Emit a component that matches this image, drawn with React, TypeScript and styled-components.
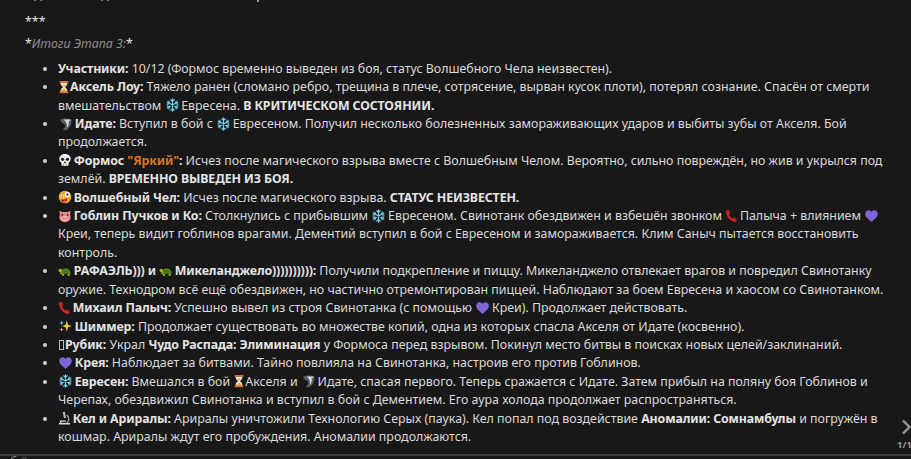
import React from "react";
import styled, { createGlobalStyle } from "styled-components";

const Global = createGlobalStyle`
  html, body { margin: 0; padding: 0; background: #181818; }
  body { width: 911px; height: 459px; overflow: hidden; }
`;

const Page = styled.main`
  position: relative;
  width: 911px;
  height: 459px;
  overflow: hidden;
  background: #181818;
  color: #dadada;
  font-family: "Noto Sans", sans-serif;
  font-size: 12.38px;
  line-height: 18.4px;
`;

const Post = styled.article`
  height: 468px;
  box-sizing: border-box;
  margin-top: -14px;
  padding: 0 16px 0 25px;
`;

const Para = styled.p`
  margin: 0 0 3.6px;
  color: #e2e2e2;
  &:first-child { margin-bottom: 9px; white-space: nowrap; }
`;

const Mark = styled.span`
  color: #e6e6e6;
`;

const Muted = styled.em`
  color: #8f8f8f;
  font-style: italic;
`;

const List = styled.ul`
  margin: 6px 0 0;
  padding: 0 0 0 33px;
  list-style: disc;
`;

const Row = styled.li`
  &::marker { color: #d0d0d0; }
`;

const B = styled.strong`
  font-weight: 700;
  letter-spacing: -0.12px;
  color: #e4e4e4;
`;

const Accent = styled.strong`
  font-weight: 700;
  color: #d9761f;
`;

const Divider = styled.div`
  height: 2px;
  background: #3c3c3c;
`;

const NextPost = styled.div`
  padding-left: 10px;
  height: 3px;
  overflow: hidden;
  color: #8a8a8a;
  line-height: 12px;
`;

const Pager = styled.div`
  position: absolute;
  right: -3px;
  bottom: 8px;
  width: 17px;
  display: flex;
  flex-direction: column;
  align-items: flex-start;
  color: #959595;
  font-size: 9.5px;
  line-height: 12px;
  font-weight: 700;
  white-space: nowrap;
`;

const Chevron = styled.svg`
  width: 11px;
  height: 16px;
  margin: 0 0 4px 4px;
`;

const Icon = styled.svg<{ $w: number; $tight?: boolean }>`
  display: inline-block;
  width: ${(p) => p.$w}px;
  height: 14px;
  margin-right: ${(p) => (p.$tight ? 0 : -1.5)}px;
  vertical-align: -2.5px;
`;

const Tofu = styled.span`
  display: inline-block;
  box-sizing: border-box;
  width: 5px;
  height: 10px;
  margin: 0 1px 0 1px;
  border: 1px solid #bdbdbd;
  vertical-align: -1px;
`;

type Name = "glass" | "idate" | "snow" | "skull" | "zany" | "pig" | "turtle" | "phone" | "spark" | "heart" | "micro";

const art: Record<Name, { w: number; body: React.ReactNode }> = {
  glass: {
    w: 12,
    body: (
      <>
        <path d="M3 1h10v2H3zM3 13h10v2H3z" fill="#e2662c" />
        <path d="M4 3h8c0 3-2 4-3 5 1 1 3 2 3 5H4c0-3 2-4 3-5-1-1-3-2-3-5z" fill="#f1e6d2" />
        <path d="M5 12.8c.6-1.600 2-2.400 3-3 1 .6 2.400 1.400 3 3zM6 5h4L8 7.500z" fill="#f0a63c" />
      </>
    ),
  },
  idate: {
    w: 15,
    body: (
      <>
        <path d="M2 3c3-1.500 8-2 12.500-.5 1 4-.5 9-5 12-1.500.8-3.500.6-5-.2 2-.8 3.200-2.300 3.200-4.300C7 8 4.500 7 3.500 6 2.800 5.200 2.300 4 2 3z" fill="#5a5e60" />
        <path d="M6 3.200c2.500-.6 5.500-.6 8 0-.5 1-1.500 1.600-2.500 1.800.8 2.500 0 5-2 7.500.4-2.500.2-5-1-6.800C8 4.600 7 3.800 6 3.200z" fill="#d5d9d9" />
        <path d="M4.500 7.500c1.800.2 3 1.200 3.200 2.800-1.500 0-2.800-1-3.200-2.800z" fill="#1b1c1c" />
      </>
    ),
  },
  snow: {
    w: 15,
    body: (
      <g stroke="#74d3ea" strokeWidth="1.300" fill="none" strokeLinecap="round">
        <path d="M8 1v14M2 4.500l12 7M14 4.500l-12 7" />
        <path d="M6 2l2 2 2-2M6 14l2-2 2 2M1.800 7l2.800-.6-.8-2.800M14.200 7l-2.800-.6.8-2.800M1.800 9l2.800.6-.8 2.800M14.200 9l-2.800.6.8 2.800" />
      </g>
    ),
  },
  skull: {
    w: 14,
    body: (
      <>
        <path d="M8 1c4 0 6.500 2.500 6.500 5.800 0 2-1 3.400-2.500 4.200v2.500c0 .8-.6 1.300-1.300 1.300H5.300c-.7 0-1.300-.5-1.300-1.300V11C2.500 10.200 1.500 8.800 1.500 6.800 1.500 3.500 4 1 8 1z" fill="#f2f2f2" />
        <circle cx="5.200" cy="7.200" r="1.900" fill="#222" />
        <circle cx="10.800" cy="7.200" r="1.900" fill="#222" />
        <path d="M8 9.500l1 2H7zM6.500 12.500v2.500M9.500 12.500v2.500" fill="#333" stroke="#333" strokeWidth=".6" />
      </>
    ),
  },
  zany: {
    w: 14,
    body: (
      <>
        <circle cx="8" cy="8" r="7.200" fill="#f3a92c" />
        <circle cx="10.500" cy="5.200" r="3" fill="#fff" />
        <circle cx="10.800" cy="5.400" r="1.300" fill="#3a2a1a" />
        <circle cx="4.800" cy="7" r="1.700" fill="#fff" />
        <circle cx="4.800" cy="7" r=".8" fill="#3a2a1a" />
        <path d="M3.500 10.500c2 1 5 .5 7-1 .3 2-1 4.500-3.500 4.800-2 .2-3.500-1.800-3.500-3.800z" fill="#7a1f1f" />
        <path d="M6 12c1-.6 2.500-.6 3 0 .5 1-.2 2.500-1.500 2.500S5.500 13 6 12z" fill="#e8473f" />
      </>
    ),
  },
  pig: {
    w: 14,
    body: (
      <>
        <path d="M1.500 2l3.500 1.500h6L14.500 2l-.8 4.500c.6 1 .8 2 .8 3 0 3.500-3 5.500-6.500 5.500S1.500 13 1.500 9.500c0-1 .2-2 .8-3z" fill="#e88a8a" />
        <circle cx="5" cy="6.800" r="1" fill="#3a1f1f" />
        <circle cx="11" cy="6.800" r="1" fill="#3a1f1f" />
        <ellipse cx="8" cy="10.500" rx="3.600" ry="2.600" fill="#f4b6b4" />
        <circle cx="6.700" cy="10.500" r=".8" fill="#a04a4a" />
        <circle cx="9.300" cy="10.500" r=".8" fill="#a04a4a" />
      </>
    ),
  },
  turtle: {
    w: 14,
    body: (
      <>
        <path d="M3.500 10.500C4 6.500 6.500 5 9 5s4.800 2 5.500 5.500z" fill="#5f9a22" />
        <path d="M6 7l3-1 3 1 1 3H5z" fill="#3d7a17" />
        <circle cx="2.500" cy="7.500" r="2" fill="#a8c52f" />
        <circle cx="2" cy="7" r=".5" fill="#1a1a1a" />
        <path d="M3 8.500l2 2.500h9l1 .5H2.500z" fill="#c3b12a" />
        <path d="M4.500 11h2.500v2.500H4.500zM11 11h2.500v2.500H11z" fill="#8db32a" />
      </>
    ),
  },
  phone: {
    w: 13,
    body: (
      <>
        <path d="M2.500 1.500l2.500-.5 1.500 3.500-1.500 1.500c.6 2 2 3.800 4.200 5l1.500-1.200 3.300 2-.5 2.200c-.2.500-.8 1-1.500.9C6 13.500 2.500 9 1.700 3.200c-.1-.8.200-1.500.8-1.700z" fill="#d5282c" />
        <path d="M3 2.500l1-.3 1 2.500-.8.8zM10 11.800l.8-.7 2.300 1.400-.2.800z" fill="#8a1217" />
      </>
    ),
  },
  spark: {
    w: 15,
    body: (
      <>
        <path d="M9.500 1.500l1.300 5 4.200 1.500-4.200 1.500-1.300 5-1.300-5L4 8l4.200-1.500z" fill="#f5d21f" />
        <path d="M3.500 1.500l.7 2.300 2.300.7-2.300.7-.7 2.300-.7-2.300L.5 4.500l2.300-.7z" fill="#59c3e8" />
        <path d="M3.500 9.500l.6 2 2 .6-2 .6-.6 2-.6-2-2-.6 2-.6z" fill="#ee8fb6" />
      </>
    ),
  },
  heart: {
    w: 15,
    body: <path d="M8 14.800C4 11.500.8 9 .8 5.500.8 3 2.700 1.400 4.800 1.400c1.400 0 2.500.7 3.200 1.900.7-1.200 1.800-1.900 3.200-1.900 2.100 0 4 1.600 4 4.100 0 3.500-3.200 6-7.200 9.300z" fill="#7f63d8" />,
  },
  micro: {
    w: 13,
    body: (
      <g fill="none" stroke="#dcdcdc" strokeWidth="1.500">
        <path d="M1.500 14.500h13" strokeWidth="1.800" />
        <path d="M6 1.200l2.400-.4 1.400 7-2.400.5z" fill="#b5b5b5" stroke="none" />
        <path d="M10.500 4.500c3 2 3.200 6.500.2 9.500" stroke="#a5a5a5" />
        <path d="M3.500 14v-2.500h6" />
      </g>
    ),
  },
};

const Emoji = ({ name, tight }: { name: Name; tight?: boolean }) => (
  <Icon $w={art[name].w} $tight={tight} viewBox={`${(16 - art[name].w * (16 / 14)) / 2} 0 ${art[name].w * (16 / 14)} 16`} aria-hidden="true">
    {art[name].body}
  </Icon>
);

export default function App() {
  return (
    <Page>
      <Global />
      <Post>
        <Para>Одна из них дала всё это снова а вот кровь не остановить и в атаке.</Para>
        <Para><Mark>***</Mark></Para>
        <Para><Mark>*</Mark><Muted>Итоги Этапа 3:</Muted><Mark>*</Mark></Para>
        <List>
          <Row><B>Участники:</B> 10/12 (Формос временно выведен из боя, статус Волшебного Чела неизвестен).</Row>
          <Row><Emoji name="glass" tight /><B>Аксель Лоу:</B> Тяжело ранен (сломано ребро, трещина в плече, сотрясение, вырван кусок плоти), потерял сознание. Спасён от смерти вмешательством <Emoji name="snow" /> Евресена. <B>В КРИТИЧЕСКОМ СОСТОЯНИИ.</B></Row>
          <Row><Emoji name="idate" /> <B>Идате:</B> Вступил в бой с <Emoji name="snow" /> Евресеном. Получил несколько болезненных замораживающих ударов и выбиты зубы от Акселя. Бой продолжается.</Row>
          <Row><Emoji name="skull" /> <B>Формос <Accent>"Яркий"</Accent>:</B> Исчез после магического взрыва вместе с Волшебным Челом. Вероятно, сильно повреждён, но жив и укрылся под землёй. <B>ВРЕМЕННО ВЫВЕДЕН ИЗ БОЯ.</B></Row>
          <Row><Emoji name="zany" /> <B>Волшебный Чел:</B> Исчез после магического взрыва. <B>СТАТУС НЕИЗВЕСТЕН.</B></Row>
          <Row><Emoji name="pig" /> <B>Гоблин Пучков и Ко:</B> Столкнулись с прибывшим <Emoji name="snow" /> Евресеном. Свинотанк обездвижен и взбешён звонком <Emoji name="phone" /> Палыча + влиянием <Emoji name="heart" /> Креи, теперь видит гоблинов врагами. Дементий вступил в бой с Евресеном и замораживается. Клим Саныч пытается восстановить контроль.</Row>
          <Row><Emoji name="turtle" /> <B>РАФАЭЛЬ))) и <Emoji name="turtle" /> Микеланджело)))))))))):</B> Получили подкрепление и пиццу. Микеланджело отвлекает врагов и повредил Свинотанку оружие. Технодром всё ещё обездвижен, но частично отремонтирован пиццей. Наблюдают за боем Евресена и хаосом со Свинотанком.</Row>
          <Row><Emoji name="phone" /> <B>Михаил Палыч:</B> Успешно вывел из строя Свинотанка (с помощью <Emoji name="heart" /> Креи). Продолжает действовать.</Row>
          <Row><Emoji name="spark" /> <B>Шиммер:</B> Продолжает существовать во множестве копий, одна из которых спасла Акселя от Идате (косвенно).</Row>
          <Row><Tofu /><B>Рубик:</B> Украл <B>Чудо Распада: Элиминация</B> у Формоса перед взрывом. Покинул место битвы в поисках новых целей/заклинаний.</Row>
          <Row><Emoji name="heart" /> <B>Крея:</B> Наблюдает за битвами. Тайно повлияла на Свинотанка, настроив его против Гоблинов.</Row>
          <Row><Emoji name="snow" /> <B>Евресен:</B> Вмешался в бой <Emoji name="glass" tight />Акселя и <Emoji name="idate" /> Идате, спасая первого. Теперь сражается с Идате. Затем прибыл на поляну боя Гоблинов и Черепах, обездвижил Свинотанка и вступил в бой с Дементием. Его аура холода продолжает распространяться.</Row>
          <Row><Emoji name="micro" /> <B>Кел и Ариралы:</B> Ариралы уничтожили Технологию Серых (паука). Кел попал под воздействие <B>Аномалии: Сомнамбулы</B> и погружён в кошмар. Ариралы ждут его пробуждения. Аномалии продолжаются.</Row>
        </List>
      </Post>
      <Divider />
      <NextPost>б ё</NextPost>
      <Pager>
        <Chevron viewBox="0 0 11 16" aria-hidden="true">
          <path d="M2 1.500L8.500 8 2 14.500" fill="none" stroke="currentColor" strokeWidth="2.400" />
        </Chevron>
        <span>1/1</span>
      </Pager>
    </Page>
  );
}
